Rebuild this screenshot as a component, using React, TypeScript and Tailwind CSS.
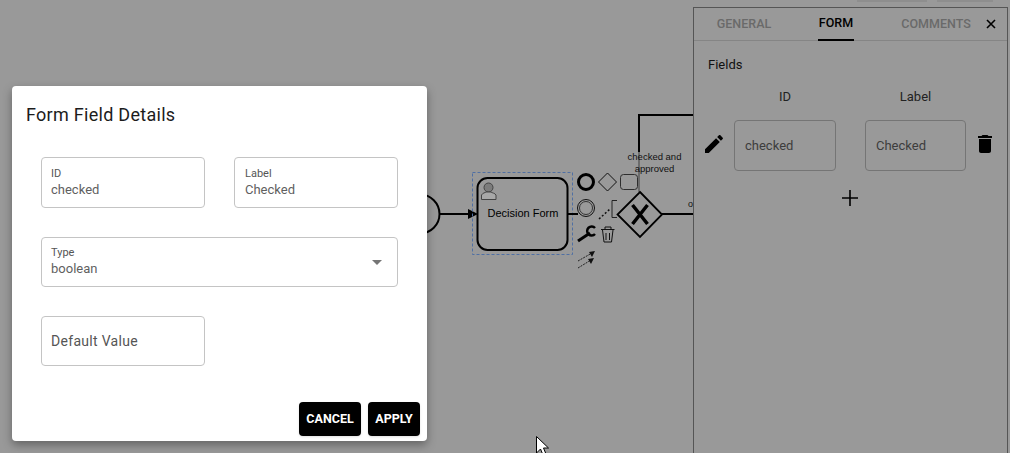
function Diagram() {
  return (
    <svg className="absolute inset-0" width="1010" height="453" viewBox="0 0 1010 453" fill="none">
      {/* start event */}
      <circle cx="420" cy="214" r="19.5" stroke="#000" strokeWidth="2" />
      <path d="M440 214H470" stroke="#000" strokeWidth="2" />
      <path d="M468 209L478 214L468 219Z" fill="#000" />
      {/* selected task */}
      <rect x="472.5" y="172.5" width="100" height="82" stroke="#4f6fa3" strokeDasharray="3 2" />
      <rect x="477.5" y="178" width="90" height="72" rx="10" stroke="#000" strokeWidth="2" />
      <circle cx="488.5" cy="187.5" r="4.5" stroke="#444" fill="#7c7c7c" />
      <path d="M481.5 199.5V195C483 192.500 485 193 486 192H491C492 193 495 193 496 195V199.5Z" stroke="#444" fill="#a8a8a8" />
      <text x="523" y="217" textAnchor="middle" fontFamily="Liberation Sans" fontSize="11" fill="#000">Decision Form</text>
      <path d="M568 214H578" stroke="#000" strokeWidth="2" />
      {/* gateway and flows */}
      <path d="M639 152V115H693" stroke="#000" strokeWidth="2" />
      <path d="M639 152V192" stroke="#5c5c5c" strokeWidth="1.500" />
      <path d="M640 192L662 214.500L640 237L617.500 214.500Z" fill="#999" stroke="#000" strokeWidth="1.800" />
      <path d="M632.500 205L647.500 224M647.500 205L632.500 224" stroke="#000" strokeWidth="3.500" />
      <path d="M662 214H693" stroke="#000" strokeWidth="2" />
      <text fontFamily="Liberation Sans" fontSize="9.500" fill="#111" textAnchor="middle">
        <tspan x="654.500" y="160">checked and</tspan>
        <tspan x="654.500" y="172">approved</tspan>
      </text>
      <text x="688" y="207" fontFamily="Liberation Sans" fontSize="9" fill="#111">o</text>
      {/* context pad */}
      <circle cx="586" cy="182" r="7.500" stroke="#000" strokeWidth="3" />
      <path d="M607.500 173L616.500 182L607.500 191L598.500 182Z" stroke="#111" />
      <rect x="620.500" y="174.500" width="17" height="15" rx="3" stroke="#2e2e2e" />
      <circle cx="586" cy="208" r="8.500" stroke="#111" />
      <circle cx="586" cy="208" r="6.500" stroke="#333" />
      <path d="M599 219L610 209" stroke="#111" strokeDasharray="2 2" strokeWidth="1.500" />
      <path d="M617 200.500H612V217.500H617" stroke="#222" />
      <path d="M578 241L590 233" stroke="#000" strokeWidth="3" />
      <path d="M595 228A4.500 4.500 0 1 0 595 234" stroke="#000" strokeWidth="2.500" />
      <path d="M601 229.500H614.500M605 229.500V227H611V229.500M602.500 230L604 242H611.500L613 230M606 233V240M609.500 233V240" stroke="#111" />
      <path d="M578 261L592 253M578 268L591 260" stroke="#222" strokeDasharray="2 1" />
      <path d="M595 251L589 252L592 257ZM594 258L588 259L591 264Z" fill="#111" />
    </svg>
  );
}

function Field({ label, value, className }: { label: string; value: string; className: string }) {
  return (
    <div className={`border border-[#c4c4c4] rounded pt-[9px] w-[164px] h-[51px] ${className}`}>
      <div className="text-[11px] leading-[13px] text-[#555]">{label}</div>
      <div className="text-[13px] leading-[18px] mt-[1px] text-[#5f5f5f]">{value}</div>
    </div>
  );
}

function DetailsModal() {
  return (
    <div className="absolute left-[12px] top-[86px] w-[415px] h-[355px] bg-white rounded shadow-[0_4px_10px_rgba(0,0,0,0.35)] flex flex-col">
      <h2 className="pl-[14px] pt-[17px] text-[18px] leading-[24px] font-normal tracking-[0.28px] text-[#1c1c1c]">Form Field Details</h2>
      <div className="pl-[29px] pt-[30px] flex flex-col gap-[29px]">
        <div className="flex gap-[29px]">
          <Field label="ID" value="checked" className="pl-[9px]" />
          <Field label="Label" value="Checked" className="pl-[10px]" />
        </div>
        <div className="w-[357px] h-[50px] border border-[#c4c4c4] rounded pl-[9px] pt-[8px] flex justify-between">
          <div>
            <div className="text-[11px] leading-[13px] text-[#555]">Type</div>
            <div className="text-[13px] leading-[18px] mt-[1px] text-[#5f5f5f]">boolean</div>
          </div>
          <div className="mr-[15px] mt-[14px] w-0 h-0 border-x-[5px] border-x-transparent border-t-[5px] border-t-[#757575]" />
        </div>
        <div className="w-[164px] h-[50px] border border-[#c4c4c4] rounded pl-[9px] flex items-center text-[14px] tracking-[0.3px] text-[#555]">
          Default Value
        </div>
      </div>
      <div className="mt-auto pb-[5px] pr-[7px] flex justify-end gap-[7px]">
        <button className="w-[62px] h-[34px] bg-black text-white rounded text-[12.5px] font-bold shadow-sm">CANCEL</button>
        <button className="w-[52px] h-[34px] bg-black text-white rounded text-[12.5px] font-bold shadow-sm">APPLY</button>
      </div>
    </div>
  );
}

function SidePanel() {
  return (
    <div className="absolute left-[693px] top-[7px] w-[315px] h-[460px] bg-[#999] border border-[#555]">
      <div className="relative flex h-[33px] border-b border-[#858585] text-[12.5px] font-medium">
        <div className="w-[100px] flex items-center justify-center text-[#6a6a6a]">GENERAL</div>
        <div className="w-[84px] flex justify-center">
          <span className="w-[36px] h-[33px] flex items-center justify-center border-b-2 border-black text-black">FORM</span>
        </div>
        <div className="w-[116px] flex items-center justify-center text-[#6a6a6a]">COMMENTS</div>
        <svg className="absolute left-[292px] top-[11px]" width="10" height="10" viewBox="0 0 10 10">
          <path d="M1 1L9 9M9 1L1 9" stroke="#000" strokeWidth="1.600" />
        </svg>
      </div>
      <div className="pl-[14px] pt-[15px] text-[13px] leading-[17px] text-[#111]">Fields</div>
      <div className="flex mt-[15px] text-[13px] leading-[17px] text-[#222] text-center">
        <div className="ml-[40px] w-[102px]">ID</div>
        <div className="ml-[29px] w-[101px]">Label</div>
      </div>
      <div className="flex items-center mt-[15px]">
        <div className="w-[40px] flex justify-center pb-[4px]">
          <svg width="24" height="24" viewBox="0 0 24 24" fill="#000">
            <path d="M3 17.25V21h3.75L17.81 9.94l-3.75-3.75L3 17.25zM20.71 7.04c.39-.39.39-1.02 0-1.41l-2.34-2.34c-.39-.39-1.02-.39-1.41 0l-1.83 1.83 3.75 3.75 1.83-1.83z" />
          </svg>
        </div>
        <div className="w-[102px] h-[51px] border border-[#757575] rounded pl-[10px] flex items-center text-[13px] text-[#3d3d3d]">checked</div>
        <div className="ml-[29px] w-[101px] h-[51px] border border-[#757575] rounded pl-[10px] flex items-center text-[13px] text-[#3d3d3d]">Checked</div>
        <div className="ml-[7px] w-[24px] flex justify-center pb-[3px]">
          <svg width="24" height="24" viewBox="0 0 24 24" fill="#000">
            <path d="M6 19c0 1.1.9 2 2 2h8c1.1 0 2-.9 2-2V7H6v12zM19 4h-3.5l-1-1h-5l-1 1H5v2h14V4z" />
          </svg>
        </div>
      </div>
      <div className="flex justify-center w-[313px] mt-[19px] pr-[1px]">
        <svg width="16" height="16" viewBox="0 0 16 16">
          <path d="M8 0V16M0 8H16" stroke="#000" strokeWidth="1.600" />
        </svg>
      </div>
    </div>
  );
}

export default function App() {
  return (
    <div className="relative w-[1010px] h-[453px] overflow-hidden bg-[#999] font-['Roboto',sans-serif]">
      <Diagram />
      {/* toolbar buttons behind the backdrop */}
      <div className="absolute left-[857px] top-0 flex gap-[10px]">
        <div className="w-[70px] h-[2px] bg-[#8e8e8e]" />
        <div className="w-[56px] h-[2px] bg-[#8e8e8e]" />
      </div>
      <SidePanel />
      <DetailsModal />
      <svg className="absolute left-[536px] top-[436px]" width="14" height="20" viewBox="0 0 14 20">
        <path d="M0.500 0.500V17L4.500 13L7 19L10 18L7.500 12H12.500Z" fill="#fff" stroke="#000" />
      </svg>
    </div>
  );
}
